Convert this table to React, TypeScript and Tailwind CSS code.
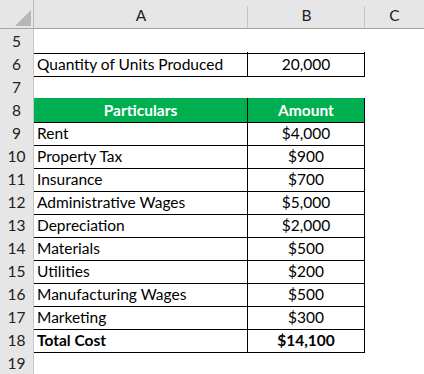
import React from 'react';

// Excel-style sheet: fixed cost breakdown table
type Row = {
  n: number;
  a?: string;
  b?: string;
  kind?: 'box' | 'head' | 'total';
};

const rows: Row[] = [
  { n: 5 },
  { n: 6, a: 'Quantity of Units Produced', b: '20,000', kind: 'box' },
  { n: 7 },
  { n: 8, a: 'Particulars', b: 'Amount', kind: 'head' },
  { n: 9, a: 'Rent', b: '$4,000', kind: 'box' },
  { n: 10, a: 'Property Tax', b: '$900', kind: 'box' },
  { n: 11, a: 'Insurance', b: '$700', kind: 'box' },
  { n: 12, a: 'Administrative Wages', b: '$5,000', kind: 'box' },
  { n: 13, a: 'Depreciation', b: '$2,000', kind: 'box' },
  { n: 14, a: 'Materials', b: '$500', kind: 'box' },
  { n: 15, a: 'Utilities', b: '$200', kind: 'box' },
  { n: 16, a: 'Manufacturing Wages', b: '$500', kind: 'box' },
  { n: 17, a: 'Marketing', b: '$300', kind: 'box' },
  { n: 18, a: 'Total Cost', b: '$14,100', kind: 'total' },
  { n: 19 },
];

const font = "font-['Lato',sans-serif] text-[15.5px]";

export default function App() {
  return (
    <div className={`w-[424px] h-[374px] overflow-hidden bg-white text-black ${font}`}>
      {/* column header row */}
      <div className="grid grid-cols-[34px_214px_117px_59px] h-[29px] bg-[#e6e6e6] border-b border-[#a6a6a6]">
        <div className="relative border-r border-[#bdbdbd]">
          <svg className="absolute left-[15px] top-[10px]" width="16" height="16" viewBox="0 0 16 16">
            <polygon points="16,0 16,16 0,16" fill="#b6b6b6" />
          </svg>
        </div>
        <div className="relative flex items-center justify-center pt-[3px] text-[#222] after:absolute after:right-0 after:top-[6px] after:bottom-0 after:w-px after:bg-[#c4c4c4]">
          A
        </div>
        <div className="relative flex items-center justify-center pt-[3px] text-[#222] after:absolute after:right-0 after:top-[6px] after:bottom-0 after:w-px after:bg-[#c4c4c4]">
          B
        </div>
        <div className="flex items-center justify-center pt-[3px] text-[#222]">C</div>
      </div>

      {rows.map((r, i) => {
        const inTable = !!r.kind;
        const next = rows[i + 1];
        const lineBelow = inTable || (next && next.kind);
        const bottom = lineBelow ? 'border-black' : 'border-transparent';
        const right = inTable ? 'border-r border-black' : '';
        const green = r.kind === 'head' ? 'bg-[#00b050] text-white font-bold' : '';
        const bold = r.kind === 'total' ? 'font-bold' : '';
        return (
          <div key={r.n} className="grid grid-cols-[34px_214px_117px_59px] h-[23px]">
            <div className="flex items-center justify-center pt-px bg-[#e6e6e6] border-r border-b border-[#c6c6c6] text-[#222]">
              {r.n}
            </div>
            <div
              className={`flex items-center border-b ${bottom} ${right} ${green} ${bold} ${
                r.kind === 'head' ? 'justify-center' : 'pl-[3px]'
              } pt-px`}
            >
              {r.a}
            </div>
            <div className={`flex items-center justify-center border-b ${bottom} ${right} ${green} ${bold} pt-px`}>
              {r.b}
            </div>
            <div />
          </div>
        );
      })}
    </div>
  );
}
